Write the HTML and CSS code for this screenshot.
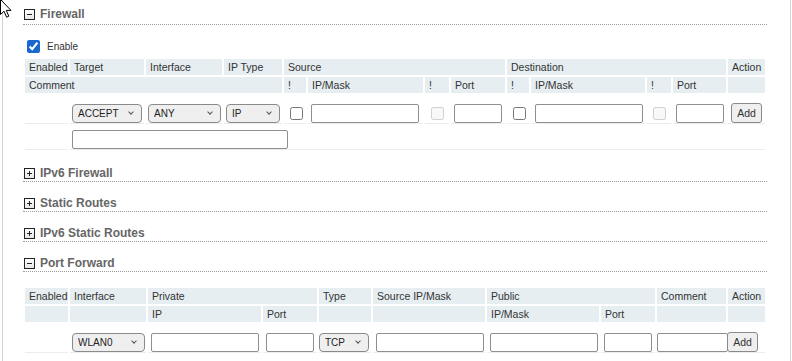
FILE: index.html
```html
<!doctype html>
<html>
<head>
    <title>Firewall</title>
    <meta charset="utf-8">
    <link rel="stylesheet" href="styles.css">
</head>
<body>
    <svg class="cursor" width="14" height="20" viewBox="0 0 14 20">
        <path d="M0.5 0.5 L0.5 15.5 L4 12.2 L6.6 18.2 L8.8 17.2 L6.3 11.4 L11 11.4 Z" fill="#fff" stroke="#000" stroke-width="1"/>
    </svg>
    <div id="page">
        <div class="section first">
            <div class="sec-head"><span class="toggle minus"></span>Firewall</div>
            <div class="sec-body">
                <label class="enable"><input type="checkbox" checked>Enable</label>
                <table class="grid">
                    <colgroup>
                        <col style="width:43px"><col style="width:74px"><col style="width:76px"><col style="width:58px">
                        <col style="width:22px"><col style="width:115px"><col style="width:24px"><col style="width:54px">
                        <col style="width:22px"><col style="width:114px"><col style="width:24px"><col style="width:53px">
                        <col style="width:37px">
                    </colgroup>
                    <tr class="hd">
                        <th>Enabled</th>
                        <th>Target</th>
                        <th>Interface</th>
                        <th>IP Type</th>
                        <th colspan="4">Source</th>
                        <th colspan="4">Destination</th>
                        <th>Action</th>
                    </tr>
                    <tr class="hd">
                        <th colspan="4">Comment</th>
                        <th>!</th>
                        <th>IP/Mask</th>
                        <th>!</th>
                        <th>Port</th>
                        <th>!</th>
                        <th>IP/Mask</th>
                        <th>!</th>
                        <th>Port</th>
                        <th></th>
                    </tr>
                    <tr class="inputs">
                        <td></td>
                        <td><span class="selbox"><select class="sel w70"><option>ACCEPT</option></select></span></td>
                        <td><span class="selbox"><select class="sel w73"><option>ANY</option></select></span></td>
                        <td><span class="selbox"><select class="sel w54"><option>IP</option></select></span></td>
                        <td><input type="checkbox"></td>
                        <td><input type="text" class="txt w108"></td>
                        <td><input type="checkbox" disabled></td>
                        <td><input type="text" class="txt w48"></td>
                        <td><input type="checkbox"></td>
                        <td><input type="text" class="txt w108 dst"></td>
                        <td><input type="checkbox" disabled></td>
                        <td><input type="text" class="txt w48"></td>
                        <td><button class="btn">Add</button></td>
                    </tr>
                    <tr class="inputs second">
                        <td></td>
                        <td colspan="12"><input type="text" class="txt comment"></td>
                    </tr>
                </table>
            </div>
        </div>

        <div class="section">
            <div class="sec-head"><span class="toggle plus"></span>IPv6 Firewall</div>
        </div>
        <div class="section">
            <div class="sec-head"><span class="toggle plus"></span>Static Routes</div>
        </div>
        <div class="section">
            <div class="sec-head"><span class="toggle plus"></span>IPv6 Static Routes</div>
        </div>

        <div class="section">
            <div class="sec-head"><span class="toggle minus"></span>Port Forward</div>
            <div class="sec-body pf">
                <table class="grid">
                    <colgroup>
                        <col style="width:43px"><col style="width:76px"><col style="width:113px"><col style="width:54px">
                        <col style="width:52px"><col style="width:112px"><col style="width:112px"><col style="width:54px">
                        <col style="width:69px"><col style="width:37px">
                    </colgroup>
                    <tr class="hd">
                        <th>Enabled</th>
                        <th>Interface</th>
                        <th colspan="2">Private</th>
                        <th>Type</th>
                        <th>Source IP/Mask</th>
                        <th colspan="2">Public</th>
                        <th>Comment</th>
                        <th>Action</th>
                    </tr>
                    <tr class="hd">
                        <th></th>
                        <th></th>
                        <th>IP</th>
                        <th>Port</th>
                        <th></th>
                        <th></th>
                        <th>IP/Mask</th>
                        <th>Port</th>
                        <th></th>
                        <th></th>
                    </tr>
                    <tr class="inputs">
                        <td></td>
                        <td><span class="selbox"><select class="sel w73"><option>WLAN0</option></select></span></td>
                        <td><input type="text" class="txt w108"></td>
                        <td><input type="text" class="txt w48"></td>
                        <td><span class="selbox flush"><select class="sel w50"><option>TCP</option></select></span></td>
                        <td><input type="text" class="txt w108"></td>
                        <td><input type="text" class="txt w108"></td>
                        <td><input type="text" class="txt w48"></td>
                        <td class="overflow"><input type="text" class="txt w71 flush"></td>
                        <td><button class="btn pf-add">Add</button></td>
                    </tr>
                </table>
            </div>
        </div>
    </div>
</body>
</html>
```

FILE: styles.css
```css
body {
    margin: 0;
    font-family: "Liberation Sans", Arial, sans-serif;
    font-size: 10.5px;
    color: #333;
    background: #fff;
}

.cursor {
    position: absolute;
    top: -1px;
    left: 0;
    z-index: 5;
}

#page {
    box-sizing: content-box;
    width: 744px;
    min-height: 361px;
    margin-left: 2px;
    padding: 6px 23px 0 20px;
    border-left: 1px solid #d4d4d4;
    border-right: 1px solid #d4d4d4;
}

/* section headers */
.section {
    margin-top: 13px;
}

.section.first {
    margin-top: 0;
}

.sec-head {
    display: flex;
    align-items: center;
    height: 16px;
    border-bottom: 1px dotted #9a9a9a;
    font-size: 12px;
    font-weight: bold;
    color: #666;
}

.first .sec-head {
    padding-bottom: 2px;
}

.toggle {
    position: relative;
    box-sizing: border-box;
    width: 11px;
    height: 11px;
    margin: 0 5px 0 1px;
    border: 1px solid #222;
    background: linear-gradient(#fff, #e6e6e6);
}

.toggle::before,
.toggle::after {
    content: "";
    position: absolute;
    background: #222;
}

.toggle::before {
    left: 2px;
    top: 4px;
    width: 5px;
    height: 1px;
}

.toggle.plus::after {
    left: 4px;
    top: 2px;
    width: 1px;
    height: 5px;
}

/* enable checkbox */
.enable {
    display: flex;
    align-items: center;
    padding-top: 12px;
    margin-bottom: 1px;
    font-size: 10px;
}

.enable input {
    margin: 3px 7px 3px 4px;
    accent-color: #1868d0;
}

/* tables */
.grid {
    table-layout: fixed;
    width: 744px;
    border-collapse: separate;
    border-spacing: 2px;
}

.grid th {
    height: 16px;
    padding: 0 4px;
    background: #e6eef1;
    font-weight: normal;
    text-align: left;
    line-height: 16px;
    white-space: nowrap;
    overflow: hidden;
}

.grid td {
    padding: 8px 0 0;
    height: 20px;
    border-bottom: 1px solid #ececec;
    vertical-align: middle;
    white-space: nowrap;
}

.grid tr.second td {
    padding-top: 3px;
}

.grid td.overflow {
    overflow: visible;
}

.grid input[type=checkbox] {
    margin: 3px 3px 3px 6px;
    vertical-align: middle;
}

/* select with a thin chevron */
.selbox {
    position: relative;
    display: inline-block;
    margin-left: 2px;
    vertical-align: middle;
}

.selbox.flush {
    margin-left: 0;
}

.selbox::after {
    content: "";
    position: absolute;
    right: 9px;
    top: 6px;
    width: 3px;
    height: 3px;
    border-right: 1px solid #555;
    border-bottom: 1px solid #555;
    transform: rotate(45deg);
    pointer-events: none;
}

.sel {
    -webkit-appearance: none;
    appearance: none;
    display: block;
    box-sizing: border-box;
    height: 19px;
    margin: 0;
    padding: 0 14px 0 5px;
    border: 1px solid #8a8a8a;
    border-radius: 4px;
    background-color: #efefef;
    font-family: "Liberation Sans", Arial, sans-serif;
    font-size: 10px;
    color: #222;
}

.txt {
    box-sizing: border-box;
    height: 19px;
    margin-left: 3px;
    padding: 0 3px;
    border: 1px solid #8f8f8f;
    border-radius: 2px;
    font-size: 10px;
    vertical-align: middle;
}

.flush {
    margin-left: 0;
}

.dst {
    margin-left: 4px;
}

.w48 { width: 48px; }
.w50 { width: 50px; }
.w54 { width: 54px; }
.w70 { width: 70px; }
.w71 { width: 71px; position: relative; }
.w73 { width: 73px; }
.w108 { width: 108px; }

.comment {
    width: 216px;
    margin-left: 2px;
}

.btn {
    box-sizing: border-box;
    width: 31px;
    height: 20px;
    margin-left: 3px;
    padding: 0;
    border: 1px solid #8a8a8a;
    border-radius: 3px;
    background: #efefef;
    font-family: "Liberation Sans", Arial, sans-serif;
    font-size: 10.5px;
    color: #333;
    vertical-align: middle;
}

.btn.pf-add {
    margin-left: -1px;
    position: relative;
}

.pf {
    margin-top: 14px;
}
```
